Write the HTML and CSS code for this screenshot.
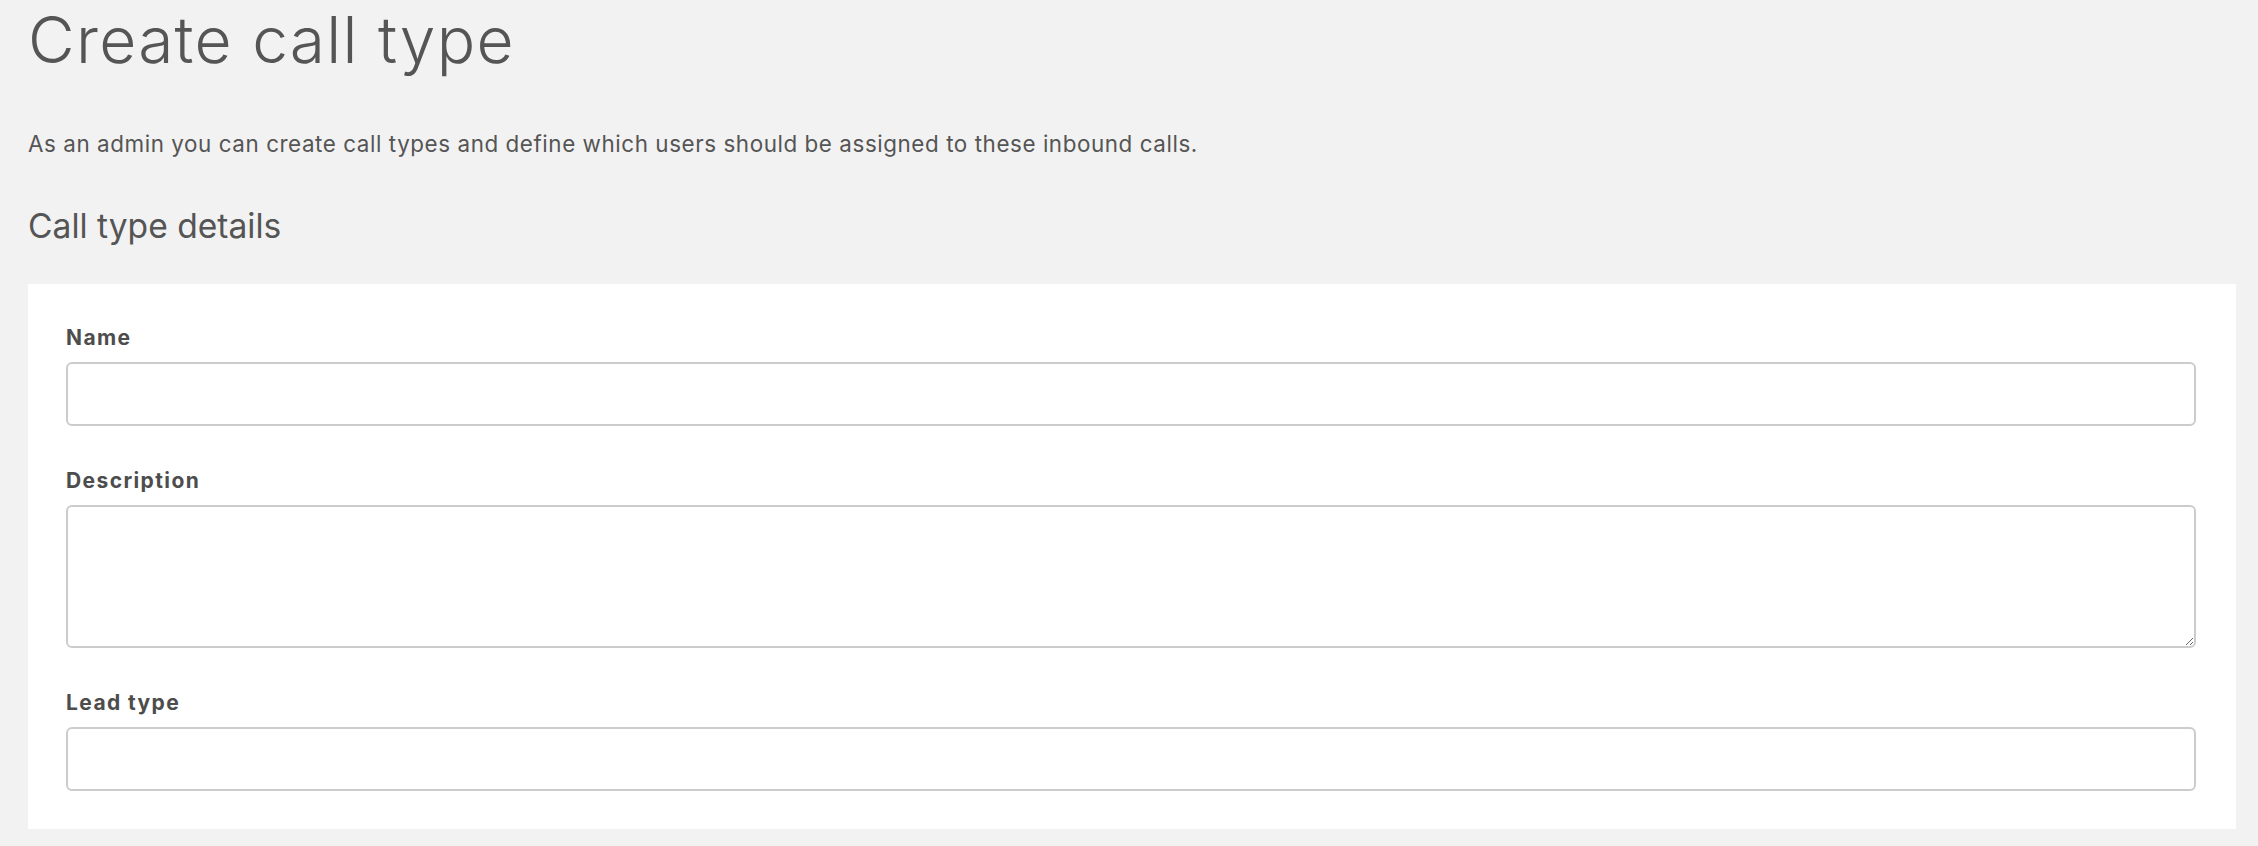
FILE: index.html
```html
<!DOCTYPE html>
<html lang="en">
<head>
<meta charset="utf-8">
<title>Create call type</title>
<link rel="stylesheet" href="styles.css">
</head>
<body>
<main class="page">
  <h1 class="page-title">Create call type</h1>
  <p class="page-intro">As an admin you can create call types and define which users should be assigned to these inbound calls.</p>
  <h2 class="section-title">Call type details</h2>
  <form class="card">
    <div class="field">
      <label class="field-label" for="name">Name</label>
      <input class="field-input" id="name" type="text">
    </div>
    <div class="field">
      <label class="field-label" for="description">Description</label>
      <textarea class="field-input field-textarea" id="description"></textarea>
    </div>
    <div class="field">
      <label class="field-label" for="lead">Lead type</label>
      <input class="field-input" id="lead" type="text">
    </div>
  </form>
</main>
</body>
</html>
```

FILE: styles.css
```css
* {
  box-sizing: border-box;
}

html, body {
  margin: 0;
  padding: 0;
  background: #f2f2f2;
}

body {
  font-family: Inter, "Open Sans", "Liberation Sans", sans-serif;
  color: #555555;
}

.page {
  padding: 0 22px 0 28px;
}

.page-title {
  margin: 0;
  font-size: 64px;
  line-height: 80px;
  font-weight: 300;
  letter-spacing: 1.3px;
  color: #555555;
}

.page-intro {
  margin: 48px 0 0;
  font-size: 22.4px;
  line-height: 32px;
  font-weight: 400;
  letter-spacing: 0.57px;
  color: #555555;
}

.section-title {
  margin: 44px 0 0;
  font-size: 33.6px;
  line-height: 44px;
  font-weight: 400;
  color: #555555;
}

.card {
  margin: 36px 0 0;
  background: #ffffff;
  padding: 40px 40px 38px 38px;
  display: flex;
  flex-direction: column;
  gap: 41px;
}

.field {
  display: flex;
  flex-direction: column;
  gap: 10px;
}

.field-label {
  display: block;
  font-size: 21px;
  line-height: 28px;
  font-weight: 700;
  letter-spacing: 1.4px;
  color: #4d4d4d;
}

.field-input {
  display: block;
  width: 100%;
  height: 64px;
  margin: 0;
  padding: 8px 14px;
  border: 2px solid #cccccc;
  border-radius: 6px;
  background: #ffffff;
  font: inherit;
  font-size: 20px;
  color: #555555;
  outline: none;
}

.field-textarea {
  height: 143px;
  resize: vertical;
}
```
